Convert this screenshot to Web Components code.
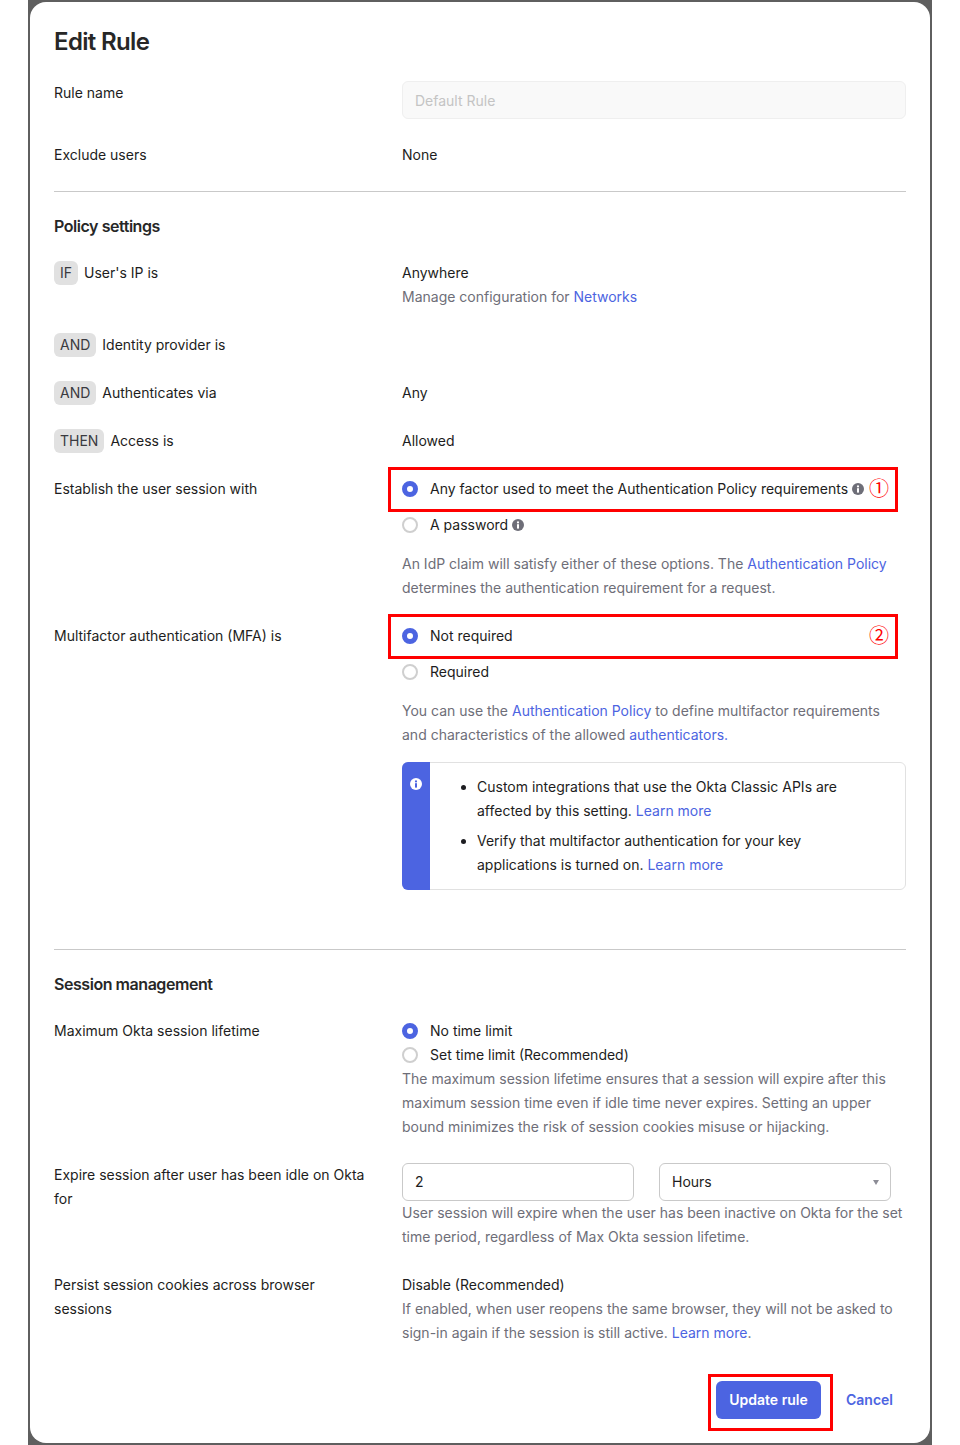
<!DOCTYPE html>
<html lang="en">
<head>
<meta charset="utf-8">
<title>Edit Rule</title>
<style>
  html, body { margin: 0; background: #fff; }
  body { font: 14px/24px Inter, "Liberation Sans", sans-serif; color: #1d1d21; }
</style>
</head>
<body>
<template id="info-icon-tpl">
  <style>
    :host { display: inline-block; width: 12px; height: 12px; line-height: 0; vertical-align: -1px; }
    svg { display: block; }
  </style>
  <svg width="12" height="12" viewBox="0 0 12 12">
    <circle cx="6" cy="6" r="6" fill="var(--icon-bg, #6e6e78)"/>
    <circle cx="6" cy="3.4" r="1.1" fill="var(--icon-fg, #fff)"/>
    <rect x="5" y="5.2" width="2" height="4.4" fill="var(--icon-fg, #fff)"/>
  </svg>
</template>

<script>
function shadow(host, html) {
  host.attachShadow({ mode: 'open' }).innerHTML = html;
}

class RuleCard extends HTMLElement {
  constructor() {
    super();
    shadow(this, `
      <style>
        :host { display: block; width: 904px; height: 1445px; margin: 0 28px; box-sizing: border-box; padding: 2px; background: #5f5f5f; }
        .card { box-sizing: border-box; height: 100%; background: #fff; border-radius: 16px; padding: 26px 24px 0; }
        h1 { margin: 0 0 25px; font-size: 24px; line-height: 28px; font-weight: 600; letter-spacing: -0.65px; color: #272727; }
      </style>
      <div class="card">
        <h1></h1>
        <slot></slot>
      </div>`);
  }
  connectedCallback() {
    this.shadowRoot.querySelector('h1').textContent = this.getAttribute('heading');
  }
}

class RuleRow extends HTMLElement {
  constructor() {
    super();
    shadow(this, `
      <style>
        :host { display: grid; grid-template-columns: 348px 504px; margin-bottom: 24px; }
        .label { display: flex; align-items: flex-start; gap: 6px; padding-right: 28px; }
      </style>
      <div class="label"><slot name="label"></slot></div>
      <div><slot></slot></div>`);
  }
}

class CondTag extends HTMLElement {
  constructor() {
    super();
    shadow(this, `
      <style>
        :host { display: block; flex: none; padding: 0 6px; height: 24px; border-radius: 6px; background: #e1e1e1; color: #3a3a40; }
      </style>
      <slot></slot>`);
  }
}

class SectionHead extends HTMLElement {
  constructor() {
    super();
    shadow(this, `
      <style>
        :host { display: block; font-size: 16px; line-height: 20px; font-weight: 600; letter-spacing: -0.45px; color: #272727; margin-bottom: 25px; }
      </style>
      <slot></slot>`);
  }
}

class RuleDivider extends HTMLElement {
  constructor() {
    super();
    shadow(this, `
      <style>
        :host { display: block; height: 1px; background: #c9c9c9; margin-bottom: 24px; }
      </style>`);
  }
}

class HelpText extends HTMLElement {
  constructor() {
    super();
    shadow(this, `
      <style>
        :host { display: block; color: #6e6e78; }
      </style>
      <slot></slot>`);
  }
}

class RuleLink extends HTMLElement {
  constructor() {
    super();
    shadow(this, `
      <style>
        :host { color: #4c64e1; }
      </style>
      <slot></slot>`);
  }
}

class InfoIcon extends HTMLElement {
  constructor() {
    super();
    this.attachShadow({ mode: 'open' }).appendChild(
      document.getElementById('info-icon-tpl').content.cloneNode(true));
  }
}

class RadioOption extends HTMLElement {
  constructor() {
    super();
    shadow(this, `
      <style>
        :host { display: flex; align-items: center; gap: 12px; height: 24px; position: relative; }
        .dot { flex: none; width: 16px; height: 16px; box-sizing: border-box; border-radius: 50%; border: 2px solid #cfcfcf; background: #fff; }
        :host([checked]) .dot { border: 5px solid #4c64e1; }
        .txt { display: inline-flex; align-items: center; gap: 4px; }
        :host([boxed])::after { content: ""; position: absolute; left: -14px; right: 8px; top: -10px; bottom: -11px; border: 3px solid #f00; pointer-events: none; }
        .num { position: absolute; right: 17px; top: -1px; font: 20px/24px "Noto Sans CJK JP", "DejaVu Sans", sans-serif; color: #f00; }
      </style>
      <span class="dot"></span>
      <span class="txt"><slot></slot></span>
      <span class="num"><slot name="num"></slot></span>`);
  }
}

class NoteBox extends HTMLElement {
  constructor() {
    super();
    shadow(this, `
      <style>
        :host { display: flex; border: 1px solid #e1e1e1; border-radius: 6px; --icon-bg: #fff; --icon-fg: #4c64e1; }
        .bar { flex: none; width: 28px; margin: -1px 0 -1px -1px; background: #4c64e1; border-radius: 6px 0 0 6px; display: flex; justify-content: center; padding-top: 16px; }
        .body { flex: 1; padding: 12px 24px 12px 0; }
      </style>
      <div class="bar"><info-icon></info-icon></div>
      <div class="body"><slot></slot></div>`);
  }
}

class NoteList extends HTMLElement {
  constructor() {
    super();
    shadow(this, `
      <style>
        :host { display: block; padding-left: 47px; }
      </style>
      <slot></slot>`);
  }
}

class NoteItem extends HTMLElement {
  constructor() {
    super();
    shadow(this, `
      <style>
        :host { display: list-item; list-style: disc outside; }
        :host(:not(:first-child)) { margin-top: 6px; }
      </style>
      <slot></slot>`);
  }
}

class FieldBox extends HTMLElement {
  constructor() {
    super();
    shadow(this, `
      <style>
        :host { display: flex; align-items: center; justify-content: space-between; box-sizing: border-box; height: 38px; padding: 0 12px; border: 1px solid #c9c9c9; border-radius: 6px; background: #fff; }
        :host([disabled]) { background: #f9f9f9; border-color: #efefef; color: #c4c4c4; padding-top: 2px; }
        .caret { display: none; width: 0; height: 0; border: 3.5px solid transparent; border-top: 5px solid #8c8c96; border-bottom: 0; margin-right: -1px; }
        :host([select]) .caret { display: block; }
      </style>
      <span><slot></slot></span>
      <span class="caret"></span>`);
  }
}

class FieldPair extends HTMLElement {
  constructor() {
    super();
    shadow(this, `
      <style>
        :host { display: grid; grid-template-columns: 232px 232px; gap: 25px; }
      </style>
      <slot></slot>`);
  }
}

class RuleFooter extends HTMLElement {
  constructor() {
    super();
    shadow(this, `
      <style>
        :host { display: flex; justify-content: flex-end; align-items: center; margin-top: 36px; padding-right: 13px; font-weight: 600; }
        .save { position: relative; height: 38px; width: 105px; display: flex; align-items: center; justify-content: center; background: #4c64e1; color: #fff; border-radius: 6px; margin-right: 25px; }
        .save::after { content: ""; position: absolute; left: -8px; right: -12px; top: -7px; bottom: -12px; border: 3px solid #f00; }
        .cancel { color: #4c64e1; }
      </style>
      <div class="save"></div>
      <div class="cancel"></div>`);
  }
  connectedCallback() {
    this.shadowRoot.querySelector('.save').textContent = this.getAttribute('save');
    this.shadowRoot.querySelector('.cancel').textContent = this.getAttribute('cancel');
  }
}

const tags = {
  'info-icon': InfoIcon, 'rule-card': RuleCard, 'rule-row': RuleRow, 'cond-tag': CondTag,
  'section-head': SectionHead, 'rule-divider': RuleDivider, 'help-text': HelpText,
  'rule-link': RuleLink, 'radio-option': RadioOption, 'note-box': NoteBox,
  'note-list': NoteList, 'note-item': NoteItem, 'field-box': FieldBox,
  'field-pair': FieldPair, 'rule-footer': RuleFooter
};
Object.keys(tags).forEach(name => customElements.define(name, tags[name]));
</script>

<rule-card heading="Edit Rule">
  <rule-row>
    <span slot="label">Rule name</span>
    <field-box disabled>Default Rule</field-box>
  </rule-row>
  <rule-row>
    <span slot="label">Exclude users</span>
    None
  </rule-row>
  <rule-divider></rule-divider>

  <section-head>Policy settings</section-head>
  <rule-row>
    <cond-tag slot="label">IF</cond-tag><span slot="label">User's IP is</span>
    <div>Anywhere</div>
    <help-text>Manage configuration for <rule-link>Networks</rule-link></help-text>
  </rule-row>
  <rule-row>
    <cond-tag slot="label">AND</cond-tag><span slot="label">Identity provider is</span>
  </rule-row>
  <rule-row>
    <cond-tag slot="label">AND</cond-tag><span slot="label">Authenticates via</span>
    Any
  </rule-row>
  <rule-row>
    <cond-tag slot="label">THEN</cond-tag><span slot="label">Access is</span>
    Allowed
  </rule-row>
  <rule-row>
    <span slot="label">Establish the user session with</span>
    <radio-option checked boxed>Any factor used to meet the Authentication Policy requirements <info-icon></info-icon><span slot="num">①</span></radio-option>
    <radio-option style="margin-top:12px">A password <info-icon></info-icon></radio-option>
    <help-text style="margin-top:15px">An IdP claim will satisfy either of these options. The <rule-link>Authentication Policy</rule-link> determines the authentication requirement for a request.</help-text>
  </rule-row>
  <rule-row style="margin-bottom:59px">
    <span slot="label">Multifactor authentication (MFA) is</span>
    <radio-option checked boxed>Not required<span slot="num">②</span></radio-option>
    <radio-option style="margin-top:12px">Required</radio-option>
    <help-text style="margin-top:15px">You can use the <rule-link>Authentication Policy</rule-link> to define multifactor requirements and characteristics of the allowed <rule-link>authenticators.</rule-link></help-text>
    <note-box style="margin-top:15px">
      <note-list>
        <note-item>Custom integrations that use the Okta Classic APIs are affected by this setting. <rule-link>Learn more</rule-link></note-item>
        <note-item>Verify that multifactor authentication for your key applications is turned on. <rule-link>Learn more</rule-link></note-item>
      </note-list>
    </note-box>
  </rule-row>
  <rule-divider></rule-divider>

  <section-head>Session management</section-head>
  <rule-row>
    <span slot="label">Maximum Okta session lifetime</span>
    <radio-option checked>No time limit</radio-option>
    <radio-option>Set time limit (Recommended)</radio-option>
    <help-text>The maximum session lifetime ensures that a session will expire after this maximum session time even if idle time never expires. Setting an upper bound minimizes the risk of session cookies misuse or hijacking.</help-text>
  </rule-row>
  <rule-row>
    <span slot="label">Expire session after user has been idle on Okta for</span>
    <field-pair>
      <field-box>2</field-box>
      <field-box select>Hours</field-box>
    </field-pair>
    <help-text>User session will expire when the user has been inactive on Okta for the set time period, regardless of Max Okta session lifetime.</help-text>
  </rule-row>
  <rule-row style="margin-bottom:0">
    <span slot="label">Persist session cookies across browser sessions</span>
    <div>Disable (Recommended)</div>
    <help-text>If enabled, when user reopens the same browser, they will not be asked to sign-in again if the session is still active. <rule-link>Learn more</rule-link>.</help-text>
  </rule-row>
  <rule-footer save="Update rule" cancel="Cancel"></rule-footer>
</rule-card>
</body>
</html>
